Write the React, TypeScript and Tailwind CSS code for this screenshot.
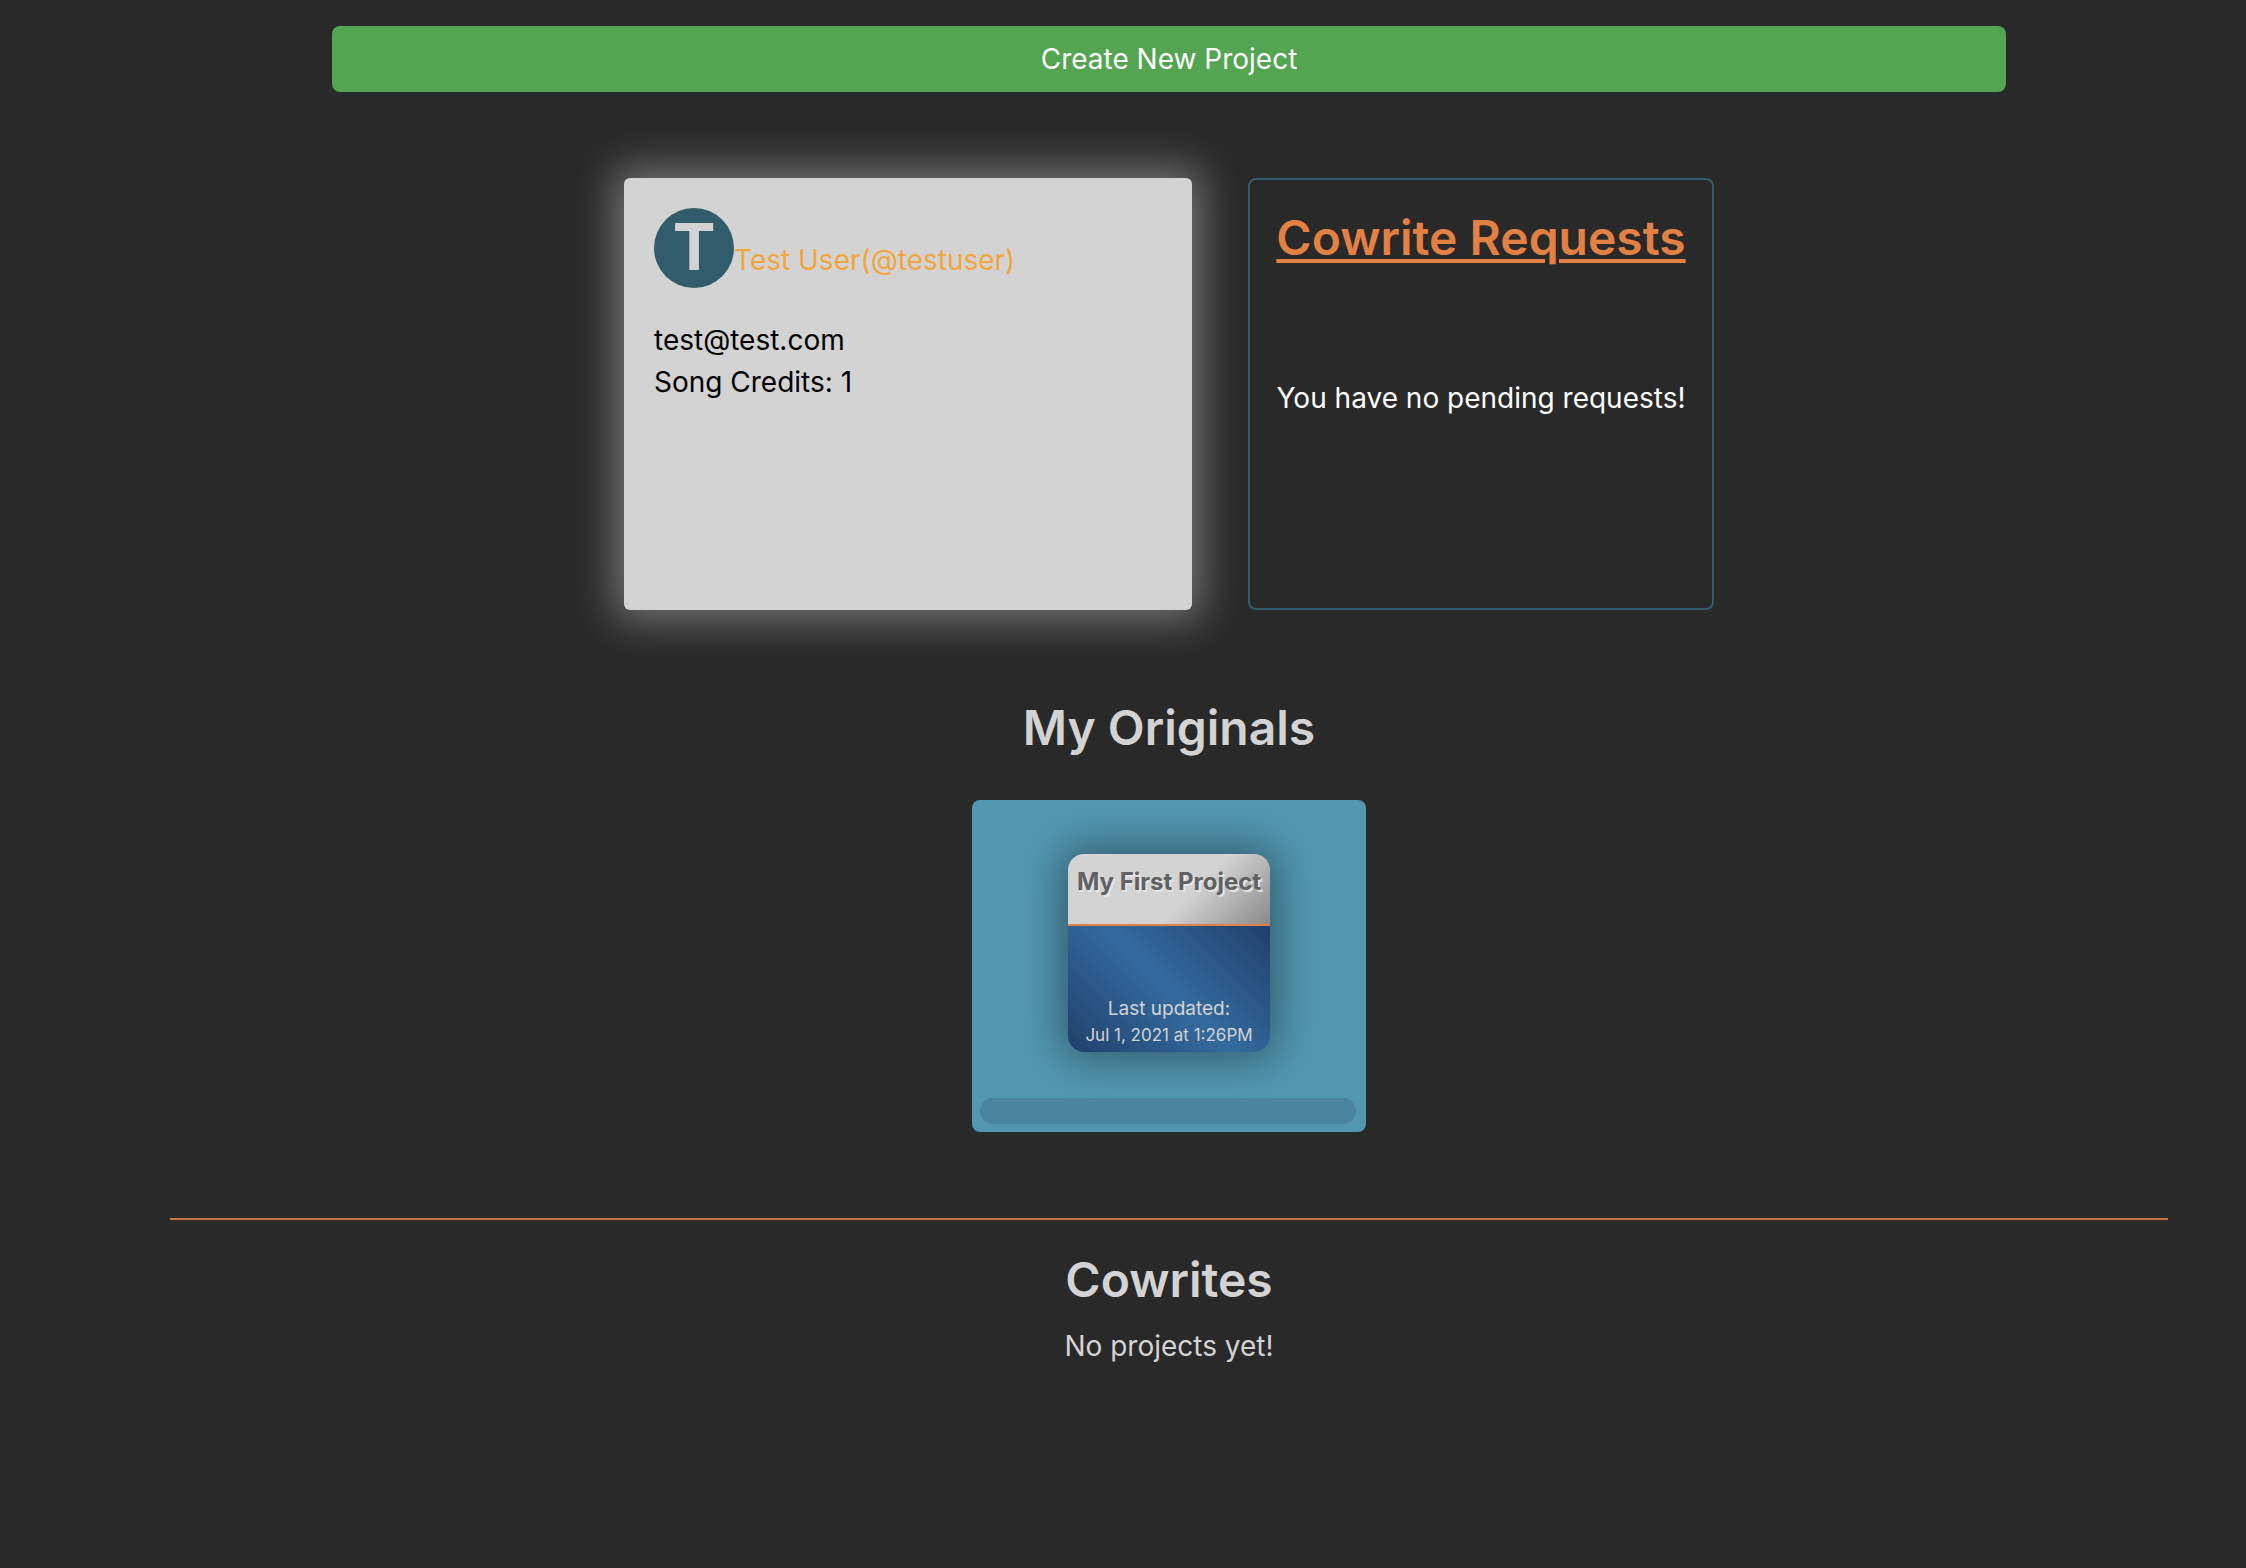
function ProfileCard() {
  return (
    <section className="min-h-[432px] w-[568px] rounded-md bg-[#d3d3d3] p-[30px] text-black shadow-[0_0_40px_10px_rgba(211,211,211,0.45)]">
      <div className="flex items-baseline">
        <div className="flex size-20 shrink-0 items-start justify-center rounded-full bg-[#315c6b] text-[64px] leading-[78px] font-bold text-[#d3d3d3]">
          T
        </div>
        <a href="#profile" className="text-[#f2a63c]">
          Test User(@testuser)
        </a>
      </div>
      <div className="mt-[31px]">
        <p>test@test.com</p>
        <p>Song Credits: 1</p>
      </div>
    </section>
  );
}

function RequestsCard() {
  return (
    <section className="min-h-[432px] w-[466px] rounded-lg border-2 border-[#315c6b] py-7 text-center whitespace-nowrap">
      <h2 className="text-[48px] leading-[60px] font-semibold">
        <a href="#requests" className="text-[#e38144] underline decoration-4 underline-offset-4">
          Cowrite Requests
        </a>
      </h2>
      <p className="mt-[109px] text-white">You have no pending requests!</p>
    </section>
  );
}

function ProjectCard() {
  return (
    <a
      href="#project"
      className="flex h-[198px] w-[202px] flex-col overflow-hidden rounded-2xl text-center whitespace-nowrap text-[#d3d3d3] shadow-[0_0_40px_6px_rgba(0,0,0,0.4)]"
    >
      <h3 className="h-[72px] border-b-2 border-[#e38144] bg-[linear-gradient(135deg,#d3d3d3_60%,#8a8a8a)] pt-2.5 text-[24px] leading-9 font-bold text-[#616161] [text-shadow:2px_2px_1px_#e6e6e6]">
        My First Project
      </h3>
      <div className="flex flex-1 flex-col justify-end bg-[linear-gradient(45deg,#213f6b,#2b5a8a_30%,#346b9d_50%,#2b5a8a_70%,#213f6b)] pb-1 leading-[26px]">
        <p className="text-[19px]">Last updated:</p>
        <p className="text-[17px]">Jul 1, 2021 at 1:26PM</p>
      </div>
    </a>
  );
}

export default function App() {
  return (
    <main className="min-h-screen bg-[#292929] pt-[26px] pr-[78px] pb-16 pl-[170px] font-['Inter',sans-serif] text-[28px] leading-[42px] text-[#d3d3d3]">
      <div className="px-[162px]">
        <button type="button" className="w-full rounded-lg bg-[#53a551] py-3 text-white">
          Create New Project
        </button>
      </div>

      <div className="mt-[86px] flex justify-center gap-14">
        <ProfileCard />
        <RequestsCard />
      </div>

      <section className="mt-[88px] flex flex-col items-center">
        <h2 className="text-[48px] leading-[60px] font-semibold">My Originals</h2>
        <div className="mt-[42px] flex w-[394px] flex-col items-center rounded-lg bg-[#5296b0] px-2 pt-[54px] pb-2">
          <ProjectCard />
          <div className="mt-[46px] mr-0.5 h-[26px] self-stretch rounded-full bg-[#4a849e]" />
        </div>
      </section>

      <hr className="mt-[86px] border-t-2 border-[#c87441]" />

      <section className="mt-[30px] flex flex-col items-center">
        <h2 className="text-[48px] leading-[60px] font-semibold">Cowrites</h2>
        <p className="mt-[15px]">No projects yet!</p>
      </section>
    </main>
  );
}
